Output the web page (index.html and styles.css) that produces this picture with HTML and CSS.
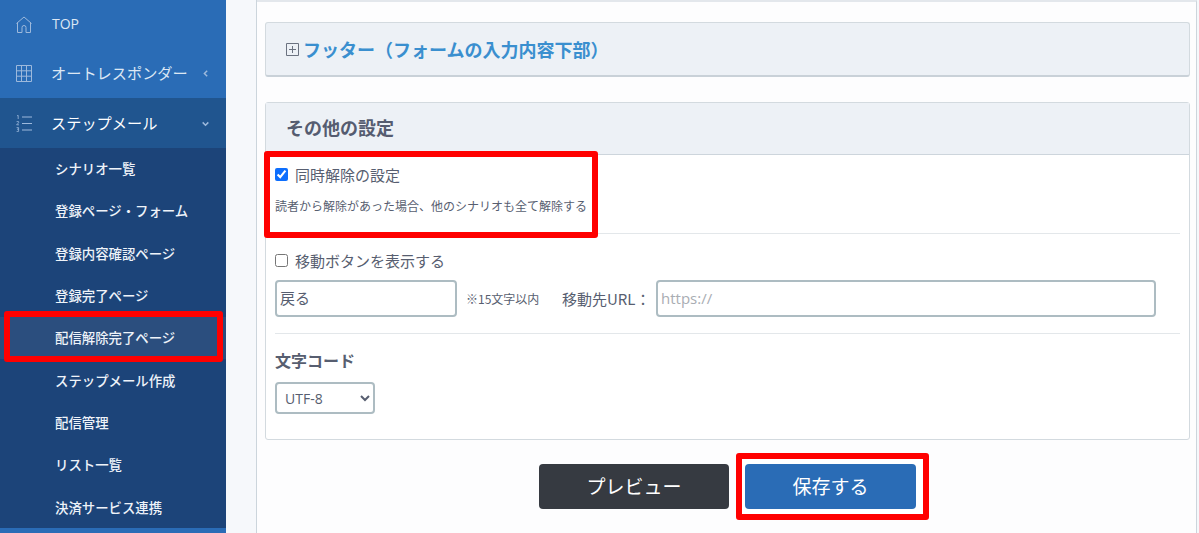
FILE: index.html
```html
<!DOCTYPE html>
<html lang="ja">
<head>
<meta charset="utf-8">
<title>配信解除完了ページ</title>
<link rel="stylesheet" href="styles.css">
</head>
<body>
<div class="app">
  <nav class="sidebar">
    <a class="nav-item nav-top">
      <svg class="nav-icon" viewBox="0 0 16 17" fill="none" stroke="#9db9dc" stroke-width="1"><path d="M.5 7.500 8 1l7.500 6.500M1.500 6.500v10h4.500v-5a2 2 0 0 1 4 0v5h4.500v-10"/></svg>
      <span class="nav-label latin">TOP</span>
    </a>
    <a class="nav-item">
      <svg class="nav-icon" viewBox="0 0 16 17" fill="none" stroke="#9db9dc" stroke-width="1"><path d="M.5 .5h15v16H.500zM.5 5.800h15M.5 11.200h15M5.500 .5v16M10.500 .5v16"/></svg>
      <span class="nav-label">オートレスポンダー</span>
      <svg class="chev" viewBox="0 0 8 8" fill="none" stroke="#9db9dc" stroke-width="1.300"><path d="M5.500 1.500 3 4l2.500 2.500"/></svg>
    </a>
    <a class="nav-item nav-open">
      <svg class="nav-icon" viewBox="0 0 16 17" fill="none" stroke="#9db9dc" stroke-width="1"><path d="M6 2h10M6 8.500h10M6 15h10"/><path stroke-width=".8" d="M1 .8 2.200 .4v3.600M.6 6.600h2v1.200L.6 9.800h2.400M.6 12.600h2v1.600H1.400h1.200v2.200H.6"/></svg>
      <span class="nav-label">ステップメール</span>
      <svg class="chev" viewBox="0 0 8 8" fill="none" stroke="#9db9dc" stroke-width="1.300"><path d="M1.500 3 4 5.500 6.500 3"/></svg>
    </a>
    <ul class="subnav">
      <li class="sub-item">シナリオ一覧</li>
      <li class="sub-item">登録ページ・フォーム</li>
      <li class="sub-item">登録内容確認ページ</li>
      <li class="sub-item">登録完了ページ</li>
      <li class="sub-item sub-active">配信解除完了ページ</li>
      <li class="sub-item">ステップメール作成</li>
      <li class="sub-item">配信管理</li>
      <li class="sub-item">リスト一覧</li>
      <li class="sub-item">決済サービス連携</li>
    </ul>
    <div class="mark mark-nav"></div>
  </nav>
  <div class="gutter"></div>
  <main class="main">
    <section class="panel panel-collapsed">
      <svg class="plus" viewBox="0 0 13 13" fill="none" stroke="#6b7280" stroke-width="1"><path d="M.5.500h12v12H.500zM3 6.500h7M6.500 3v7"/></svg>
      <h2 class="panel-link">フッター（フォームの入力内容下部）</h2>
    </section>
    <section class="panel panel-open">
      <h2 class="panel-head">その他の設定</h2>
      <div class="panel-body">
        <div class="group group-sync">
          <label class="check"><input type="checkbox" checked><span>同時解除の設定</span></label>
          <p class="help">読者から解除があった場合、他のシナリオも全て解除する</p>
        </div>
        <div class="group group-move">
          <label class="check"><input type="checkbox"><span>移動ボタンを表示する</span></label>
          <div class="move-row">
            <input class="field field-back" type="text" value="戻る">
            <span class="note">※15文字以内</span>
            <span class="url-label">移動先URL：</span>
            <input class="field field-url" type="text" placeholder="https://">
          </div>
        </div>
        <div class="group group-code">
          <h3 class="code-title">文字コード</h3>
          <select class="select"><option>UTF-8</option></select>
        </div>
        <div class="mark mark-sync"></div>
      </div>
    </section>
    <div class="actions">
      <button class="btn btn-dark" type="button">プレビュー</button>
      <div class="save-wrap">
        <button class="btn btn-blue" type="button">保存する</button>
      </div>
    </div>
  </main>
</div>
</body>
</html>
```

FILE: styles.css
```css
* { box-sizing: border-box; }
html, body { margin: 0; height: 533px; overflow: hidden; }
body {
  font-family: "Noto Sans CJK JP", "Open Sans", sans-serif;
  background: #f6f8fb;
  color: #575e70;
}
.app { display: flex; height: 533px; position: relative; }

.sidebar {
  position: relative;
  width: 226px;
  flex: none;
  background: #2a6cb6;
  color: #dce7f4;
}
.nav-item {
  display: flex;
  align-items: center;
  height: 49.5px;
  padding-left: 16px;
  font-size: 15.200px;
}
.nav-top { height: 48.500px; }
.nav-icon { width: 16px; height: 17px; flex: none; }
.nav-label { margin-left: 19px; padding-bottom: 2px; white-space: nowrap; width: 135px; }
.latin { font-family: "Open Sans", sans-serif; font-size: 14px; margin-left: 20px; width: 134px; }
.chev { width: 9px; height: 9px; margin-left: 15px; flex: none; }
.nav-open { background: #20558f; color: #fff; height: 50px; }
.subnav {
  list-style: none;
  margin: 0;
  padding: 0;
  background: #1c4479;
  height: 380px;
  color: #eef3f9;
}
.sub-item {
  height: 42.300px;
  display: flex;
  align-items: center;
  padding-left: 55px;
  padding-bottom: 2px;
  font-size: 13.400px;
  font-weight: 500;
  white-space: nowrap;
}
.sub-active { background: #2b4e7e; }
.mark { position: absolute; border: 6px solid #f00; border-radius: 3px; pointer-events: none; }
.mark-nav { left: 4px; top: 311px; width: 219px; height: 51px; }

.gutter { width: 31px; flex: none; border-right: 1px solid #ccd5dc; }

.main {
  width: 940px;
  flex: none;
  background: #fdfdfe;
  border-top: 2px solid #e3e7ec;
  border-right: 1px solid #ccd5dc;
  padding: 20px 6px 0 8px;
}
.panel {
  border: 1px solid #d3dadf;
  border-radius: 3px;
  background: #fff;
}
.panel-collapsed {
  height: 55px;
  background: #edf1f6;
  border-bottom: 2px solid #c9d1d8;
  display: flex;
  align-items: center;
  padding-left: 20px;
  gap: 4px;
}
.plus { width: 13px; height: 13px; flex: none; }
.panel-link { margin: 0; font-size: 18px; font-weight: 700; color: #3a8fcf; white-space: nowrap; }
.panel-open { height: 338px; margin-top: 25px; }
.panel-head {
  margin: 0;
  height: 52px;
  padding: 0 0 3px 20px;
  display: flex;
  align-items: center;
  background: #edf1f6;
  border-bottom: 1px solid #cdd5dc;
  font-size: 18px;
  font-weight: 700;
  color: #555c70;
}
.panel-body { position: relative; padding: 0 9px; }
.group { border-bottom: 1px solid #e3e7ea; }
.group-sync { height: 79px; padding-top: 8px; }
.group-move { height: 100px; padding-top: 15px; }
.group-code { border: 0; padding-top: 15px; }
.check { display: flex; align-items: center; gap: 7px; font-size: 15px; height: 23px; }
.check input { width: 13px; height: 13px; margin: 0; accent-color: #0d6efd; }
.help { margin: 10px 0 0; font-size: 12px; line-height: 20px; white-space: nowrap; }
.move-row { display: flex; align-items: center; margin-top: 8px; }
.field {
  height: 37px;
  border: 2px solid #adbcc2;
  border-radius: 4px;
  background: #fff;
  font: 15px "Noto Sans CJK JP", sans-serif;
  color: #575e70;
  padding: 0 3px 3px;
  outline: 0;
}
.field::placeholder { color: #a9adb3; font-family: "Open Sans", sans-serif; }
.field-back { width: 182px; }
.note { font-size: 12px; margin-left: 9px; width: 96px; white-space: nowrap; }
.url-label { font-size: 15px; width: 94px; white-space: nowrap; }
.field-url { width: 500px; }
.code-title { margin: 0 0 2px; font-size: 16px; font-weight: 700; line-height: 22px; }
.select {
  display: block;
  margin-top: 11px;
  width: 100px;
  height: 32px;
  border: 2px solid #adbcc2;
  border-radius: 4px;
  background: #fff;
  font: 14px "Open Sans", sans-serif;
  color: #575e70;
  padding-left: 4px;
}
.mark-sync { left: -2px; top: -4px; width: 334px; height: 87px; }

.actions { display: flex; justify-content: center; margin-top: 13px; align-items: center; gap: 7px; padding-left: 13px; }
.btn {
  height: 45px;
  border: 0;
  border-radius: 4px;
  color: #fff;
  font: 19px "Noto Sans CJK JP", sans-serif;
  padding: 0 0 2px;
}
.btn-dark { width: 190px; background: #363a41; }
.btn-blue { width: 171px; background: #2a6cb6; }
.save-wrap { border: 6px solid #f00; border-radius: 3px; padding: 5px 7px 5px 3px; background: #fff; }
```
